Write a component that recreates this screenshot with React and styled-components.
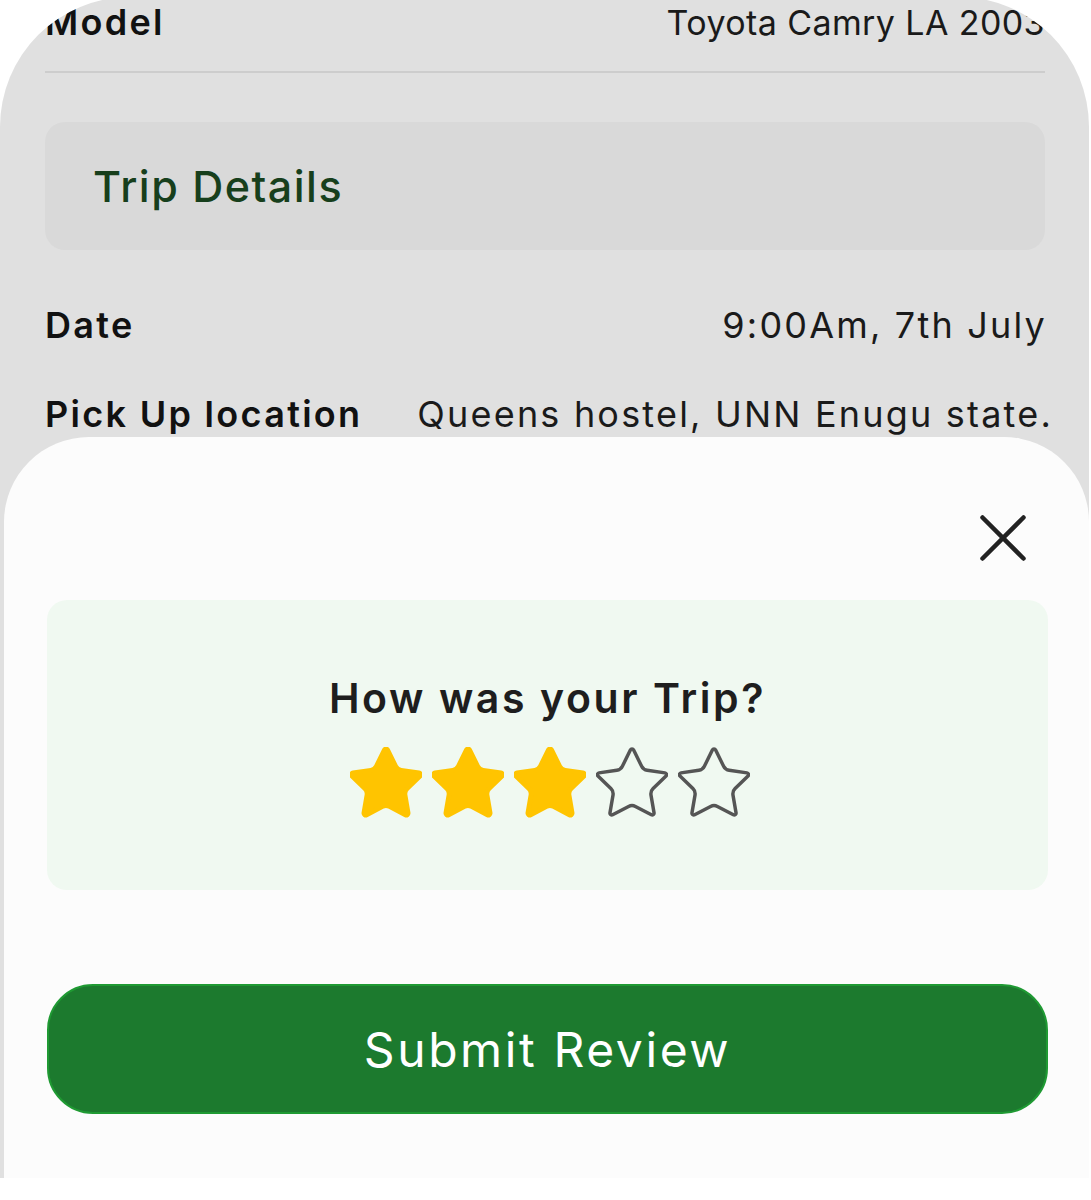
import React from "react";
import styled, { createGlobalStyle } from "styled-components";

const Global = createGlobalStyle`
  html, body { margin: 0; padding: 0; background: #ffffff; }
  body { font-family: Inter, "Noto Sans", "Liberation Sans", sans-serif; }
  * { box-sizing: border-box; }
`;

const Phone = styled.div`
  width: 1089px;
  margin-top: -3px;
  background: #e0e0e0;
  border-radius: 130px 130px 0 0;
  overflow: hidden;
  display: flex;
  flex-direction: column;
`;

const Details = styled.div`
  padding: 3px 44px 0 45px;
  display: flex;
  flex-direction: column;
`;

const Row = styled.div`
  display: flex;
  justify-content: space-between;
  align-items: center;
  height: 44px;
  margin-top: ${(p) => p.$top || 0}px;
  white-space: nowrap;
`;

const Label = styled.span`
  font-size: 36px;
  font-weight: 600;
  letter-spacing: 2.3px;
  color: #111;
`;

const Value = styled.span`
  font-size: ${(p) => p.$size || 36}px;
  font-weight: 400;
  letter-spacing: ${(p) => (p.$spacing != null ? p.$spacing : 2.2)}px;
  color: #1a1a1a;
  margin-right: ${(p) => p.$shift || 0}px;
`;

const Divider = styled.div`
  height: 2px;
  background: #cdcdcd;
  margin-top: 27px;
`;

const SectionCard = styled.div`
  margin-top: 49px;
  height: 128px;
  background: #d9d9d9;
  border-radius: 20px;
  display: flex;
  align-items: center;
  padding-left: 48px;
`;

const SectionTitle = styled.h2`
  margin: 0;
  font-size: 43px;
  font-weight: 500;
  letter-spacing: 1.5px;
  color: #173f1c;
`;

const Sheet = styled.div`
  margin: 1px 0 0 4px;
  background: #fcfcfc;
  border-radius: 85px 85px 0 0;
  padding: 78px 41px 64px 43px;
  display: flex;
  flex-direction: column;
`;

const CloseRow = styled.div`
  display: flex;
  justify-content: flex-end;
  padding-right: 22px;
`;

const CloseButton = styled.button`
  border: none;
  background: transparent;
  padding: 0;
  width: 46px;
  height: 46px;
  display: flex;
  cursor: pointer;
`;

const RatingCard = styled.div`
  margin-top: 39px;
  height: 290px;
  background: #f0f9f1;
  border-radius: 20px;
  display: flex;
  flex-direction: column;
  align-items: center;
  padding-top: 73px;
`;

const Question = styled.h3`
  margin: 0;
  line-height: 50px;
  font-size: 41px;
  font-weight: 600;
  letter-spacing: 2.6px;
  color: #1e1e1e;
`;

const Stars = styled.div`
  display: flex;
  gap: 10px;
  margin-top: 24px;
  margin-left: 4px;
`;

const SubmitButton = styled.button`
  margin-top: 94px;
  height: 130px;
  border-radius: 46px;
  background: #1c7a2e;
  border: 2px solid #1f9a33;
  color: #ffffff;
  font-family: Inter, "Noto Sans", sans-serif;
  font-size: 48px;
  font-weight: 400;
  letter-spacing: 2.6px;
  cursor: pointer;
`;

const STAR =
  "M11.525 2.295a.53.53 0 0 1 .95 0l2.31 4.679a2.123 2.123 0 0 0 1.595 1.16l5.166.756a.53.53 0 0 1 .294.904l-3.736 3.638a2.123 2.123 0 0 0-.611 1.878l.882 5.14a.53.53 0 0 1-.771.56l-4.618-2.428a2.122 2.122 0 0 0-1.973 0L6.396 21.01a.53.53 0 0 1-.77-.56l.881-5.139a2.122 2.122 0 0 0-.611-1.879L2.16 9.795a.53.53 0 0 1 .294-.906l5.165-.755a2.122 2.122 0 0 0 1.597-1.16z";

function Star({ filled }) {
  return (
    <svg width="72" height="74" viewBox="1.6 1.4 20.8 21.4">
      <path
        d={STAR}
        fill={filled ? "#ffc400" : "none"}
        stroke={filled ? "#ffc400" : "#555555"}
        strokeWidth={filled ? 1.4 : 1}
        strokeLinejoin="round"
      />
    </svg>
  );
}

export default function App() {
  const rating = 3;
  return (
    <>
      <Global />
      <Phone>
        <Details>
          <Row>
            <Label>Model</Label>
            <Value $size={34} $spacing={0.4}>Toyota Camry LA 2003</Value>
          </Row>
          <Divider />
          <SectionCard>
            <SectionTitle>Trip Details</SectionTitle>
          </SectionCard>
          <Row $top={53}>
            <Label>Date</Label>
            <Value $shift={-2}>9:00Am, 7th July</Value>
          </Row>
          <Row $top={45}>
            <Label>Pick Up location</Label>
            <Value $shift={-8}>Queens hostel, UNN Enugu state.</Value>
          </Row>
        </Details>
        <Sheet>
          <CloseRow>
            <CloseButton aria-label="Close">
              <svg width="46" height="46" viewBox="0 0 46 46">
                <path
                  d="M2.5 2.5 43.5 43.5 M43.5 2.5 2.5 43.5"
                  stroke="#222"
                  strokeWidth="4.5"
                  strokeLinecap="round"
                  fill="none"
                />
              </svg>
            </CloseButton>
          </CloseRow>
          <RatingCard>
            <Question>How was your Trip?</Question>
            <Stars>
              {[1, 2, 3, 4, 5].map((n) => (
                <Star key={n} filled={n <= rating} />
              ))}
            </Stars>
          </RatingCard>
          <SubmitButton>Submit Review</SubmitButton>
        </Sheet>
      </Phone>
    </>
  );
}
